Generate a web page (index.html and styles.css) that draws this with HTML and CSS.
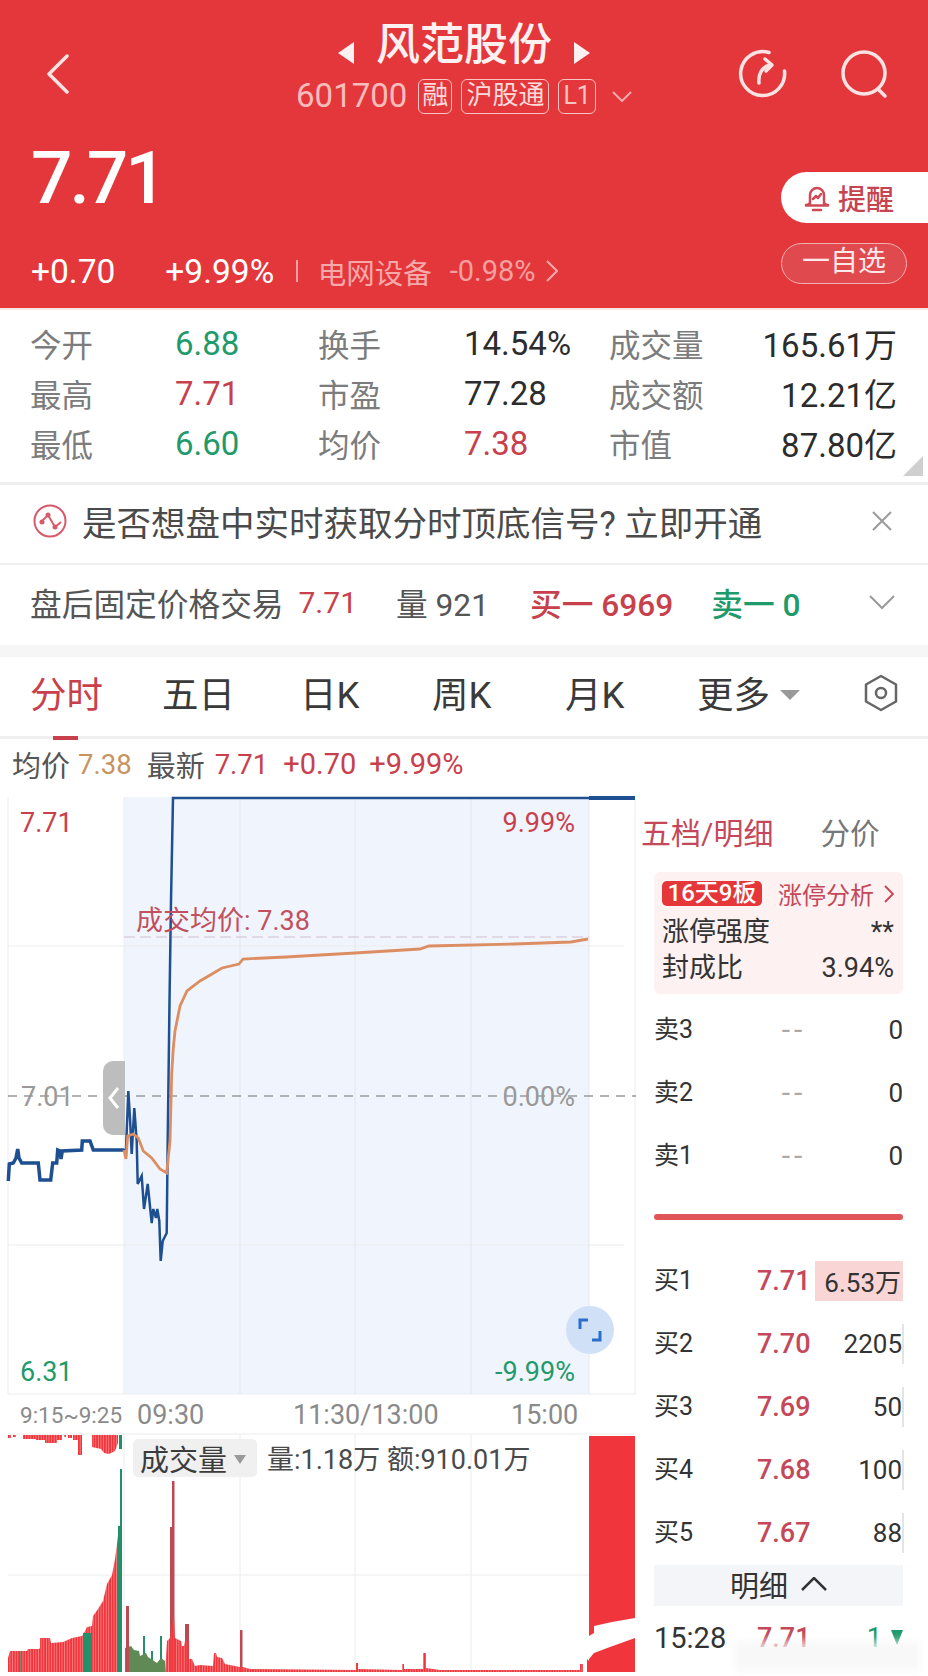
FILE: index.html
```html
<!DOCTYPE html>
<html lang="zh-CN">
<head>
<meta charset="utf-8">
<title>风范股份</title>
<link rel="stylesheet" href="styles.css">
</head>
<body>
<div class="page">
  <header class="header">
    <div class="topbar">
      <div class="back">
        <svg width="24" height="40" viewBox="0 0 24 40"><path d="M21 2 3 20l18 18" class="ico-line"/></svg>
      </div>
      <div class="identity">
        <div class="title-row">
          <span class="tri tri-left"></span>
          <span class="title">风范股份</span>
          <span class="tri tri-right"></span>
        </div>
        <div class="code-row">
          <span class="code">601700</span>
          <span class="tag tag-one">融</span>
          <span class="tag">沪股通</span>
          <span class="tag tag-l1">L1</span>
          <svg class="code-chevron" width="20" height="11" viewBox="0 0 20 11"><path d="M1 1l9 9 9-9" class="ico-thin"/></svg>
        </div>
      </div>
      <div class="top-icons">
        <svg width="50" height="50" viewBox="0 0 50 50"><path d="M31 3.500A22 22 0 1 0 46.500 22" class="ico-line"/><path d="M21 34c-1-9 3-16 11-18" class="ico-line"/><path d="M27 10l7 6-6 6" class="ico-line"/></svg>
        <svg width="50" height="50" viewBox="0 0 50 50"><circle cx="24" cy="24" r="21" class="ico-line"/><path d="M39 41l6 6" class="ico-line"/></svg>
      </div>
    </div>
    <div class="quote">
      <div class="quote-main">
        <div class="price">7.71</div>
        <div class="change-row">
          <span class="chg">+0.70</span>
          <span class="chg chg-pct">+9.99%</span>
          <span class="vbar"></span>
          <span class="sector">电网设备</span>
          <span class="sector-pct">-0.98%</span>
          <svg width="12" height="22" viewBox="0 0 12 22"><path d="M1 1l10 10L1 21" class="ico-thin"/></svg>
        </div>
      </div>
      <div class="actions">
        <div class="remind">
          <svg width="26" height="30" viewBox="0 0 26 30"><path d="M6 22V12a7 7 0 0 1 14 0v10M2 22c3 0 4-1 4-3M24 22c-3 0-4-1-4-3M2 22.500h22M9 27h8" class="ico-bell"/><path d="M9 16l3-3 2 2 3-4" class="ico-bell"/></svg>
          <span>提醒</span>
        </div>
        <div class="watch">一自选</div>
      </div>
    </div>
  </header>

  <section class="stats">
    <span class="s-label">今开</span><span class="s-val green">6.88</span>
    <span class="s-label">换手</span><span class="s-val">14.54%</span>
    <span class="s-label">成交量</span><span class="s-val right">165.61万</span>
    <span class="s-label">最高</span><span class="s-val red">7.71</span>
    <span class="s-label">市盈</span><span class="s-val">77.28</span>
    <span class="s-label">成交额</span><span class="s-val right">12.21亿</span>
    <span class="s-label">最低</span><span class="s-val green">6.60</span>
    <span class="s-label">均价</span><span class="s-val red">7.38</span>
    <span class="s-label">市值</span><span class="s-val right">87.80亿</span>
    <span class="fold"></span>
  </section>

  <section class="notice">
    <svg width="34" height="34" viewBox="0 0 34 34"><circle cx="17" cy="17" r="15.500" class="ico-signal"/><path d="M7 19l8-8 7 12 6-5" class="ico-signal"/><circle cx="9" cy="18" r="2.500" class="dot-signal"/><circle cx="15" cy="11" r="2.500" class="dot-signal"/><circle cx="22" cy="23" r="2.500" class="dot-signal"/></svg>
    <span class="notice-text">是否想盘中实时获取分时顶底信号? 立即开通</span>
    <svg class="notice-x" width="22" height="22" viewBox="0 0 22 22"><path d="M2 2l18 18M20 2 2 20" class="ico-gray"/></svg>
  </section>

  <section class="after">
    <span class="a-title">盘后固定价格交易</span>
    <span class="a-price red">7.71</span>
    <span class="a-vol">量 921</span>
    <span class="a-buy red">买一 6969</span>
    <span class="a-sell green">卖一 0</span>
    <svg class="a-chevron" width="26" height="15" viewBox="0 0 26 15"><path d="M1 1l12 12L25 1" class="ico-gray"/></svg>
  </section>

  <div class="gap"></div>

  <nav class="tabs">
    <span class="tab tab-on">分时</span>
    <span class="tab tab-5d">五日</span>
    <span class="tab tab-d">日K</span>
    <span class="tab tab-w">周K</span>
    <span class="tab tab-m">月K</span>
    <span class="tab tab-more">更多<i class="more-tri"></i></span>
    <svg class="hex" width="36" height="38" viewBox="0 0 36 38"><path d="M18 2l15 8.500v17L18 36 3 27.500v-17z" class="ico-hex"/><circle cx="18" cy="19" r="5" class="ico-hex"/></svg>
  </nav>

  <div class="info">
    <span class="i-label">均价</span><span class="i-avg">7.38</span>
    <span class="i-label i-new">最新</span><span class="i-red">7.71</span>
    <span class="i-red i-chg">+0.70</span><span class="i-red i-pct">+9.99%</span>
  </div>

  <div class="board">
    <div class="charts">
      <div class="price-chart">
        <svg class="plot" width="628" height="598" viewBox="8 796 628 598">
          <rect x="124" y="796" width="465" height="597" class="shade"/>
          <path d="M8 796v597M635 796v597M124 796v597M8 945h616M8 1244h616M8 1393h628" class="grid"/>
          <path d="M240 796v597M355 796v597M471 796v597M589 796v597" class="grid-in"/>
          <path d="M8 1095h628" class="mid-dash"/>
          <path d="M124 936h465" class="avg-dash"/>
          <polyline class="line-thick" points="8.300,1180 9.300,1163 13.300,1162 16,1157 17.700,1148 19,1157 21.700,1162 38.300,1162 40,1179 50.700,1179 52.700,1162 56.700,1162 57.700,1149 60,1150 61,1158 62.300,1150 81.700,1149 82.300,1140 90,1140 93.300,1149 124,1149"/>
          <polyline class="line-thin" points="124,1149 126,1149 128.300,1090 130,1117 131.700,1153 134.300,1107 136.700,1140 137.700,1183 141.700,1175 144,1208 147.700,1183 151.700,1222 153.300,1208 156,1217 157.300,1208 159.300,1220 160.700,1260 162.700,1240 166.700,1232 167.700,1140 169,1040 169.500,1000 171,900 173,797 589,797"/>
          <path d="M589 797h46" class="line-end"/>
          <polyline class="line-avg" points="124,1149 126,1158 127.700,1135 133.300,1133 138.300,1137 143.300,1150 151.700,1157 160,1168 166.700,1172 170,1140 171.700,1073 173.300,1047 175,1030 180,1005 187,990 200,980 212,973 222,967 239,963 243,958 286,956 355,952 420,948 429,945 514,943 571,941 588,938"/>
          <text x="20" y="831" class="ax red-t">7.71</text>
          <text x="575" y="831" class="ax red-t end">9.99%</text>
          <text x="136" y="929" class="avg-text">成交均价: 7.38</text>
          <text x="21" y="1105" class="ax gray-t">7.01</text>
          <text x="575" y="1105" class="ax gray-t end">0.00%</text>
          <text x="20" y="1380" class="ax green-t">6.31</text>
          <text x="575" y="1380" class="ax green-t end">-9.99%</text>
        </svg>
        <div class="handle">
          <svg width="12" height="24" viewBox="0 0 12 24"><path d="M10 2 2 12l8 10" class="ico-handle"/></svg>
        </div>
        <div class="expand">
          <svg width="24" height="24" viewBox="0 0 24 24"><path d="M10 2H2v9M14 22h8v-9" class="ico-expand"/></svg>
        </div>
      </div>
      <div class="time-axis">
        <span class="t-pre">9:15~9:25</span>
        <span class="t-open">09:30</span>
        <span class="t-mid">11:30/13:00</span>
        <span class="t-end">15:00</span>
      </div>
      <div class="vol-chart">
        <svg class="plot" width="628" height="243" viewBox="8 1433 628 243">
          <defs>
            <pattern id="bars" width="2.600" height="10" patternUnits="userSpaceOnUse"><rect width="2.200" height="10" fill="#f0363c"/><rect x="2.200" width="0.400" height="10" fill="#f3686c"/></pattern>
          </defs>
          <path d="M8 1433h628M8 1574h581M124 1433v238M240 1433v238M355 1433v238M471 1433v238" class="grid"/>
          <polygon fill="url(#bars)" points="8,1671 8,1657 10,1650 27,1650 28,1648 39,1648 40,1647 40,1637 50,1637 51,1642 63,1641 72,1637 82,1635 84,1632 87,1626 92,1625 93,1615 98,1608 103,1600 107,1583 112,1574 115,1558 117,1543 119,1525 121,1525 121,1671"/>
          <path fill="url(#bars)" d="M8 1434h3v3H8zM13 1434h3v2h-3zM23 1434h13v4H23zM36 1434h9v5h-9zM45 1434h12v8H45zM57 1434h5v5h-5zM64 1434h2v2h-2zM68 1434h4v3h-4zM73 1434h5v5h-5zM78 1434h4v20h-4zM92 1434h26v8l-3 8-6 3-5-1-3-4-9-2z"/>
          <path class="bar-green" d="M119 1434h3v14h-3zM120 1468h2v203h-2zM118 1525h2v146h-2zM83 1632h9v39h-9zM19 1650h1.500v21H19zM143 1635h2v36h-2zM151 1650h2v21h-2zM160 1635h2v36h-2z"/>
          <polygon class="bar-mix" points="125,1671 125,1647 131,1645 134,1649 139,1650 140,1655 146,1652 148,1656 157,1662 161,1657 165,1660 165,1671"/>
          <path class="bar-spike" d="M126 1605h3v66h-3zM170 1526h2v145h-2zM172 1480h2.500v191H172zM185 1623h4v48h-4zM240 1629h2.500v42H240z"/>
          <polygon fill="url(#bars)" points="165,1671 167,1640 170,1637 174,1613 175,1637 177,1638 181,1640 182,1645 184,1645 185,1640 189,1640 189,1658 192,1658 195,1665 200,1664 213,1665 214,1652 216,1652 217,1656 222,1657 225,1663 235,1665 240,1666 243,1666 250,1668 356,1669 356,1662 358,1662 358,1668 402,1669 402,1663 404,1663 404,1668 423,1668 423,1652 426,1652 426,1667 440,1669 580,1669 580,1663 583,1663 583,1671"/>
          <polygon class="bar-red" points="587,1671 587,1658 589,1660 589,1671"/>
          <polygon class="bar-red" points="589,1435 635,1435 635,1617 612,1621 594,1625 594,1632 589,1635"/>
          <polygon class="bar-red" points="589,1658 594,1652 610,1646 635,1637 635,1671 589,1671"/>
        </svg>
        <div class="vol-head">
          <span class="vol-select">成交量<i class="vol-tri"></i></span>
          <span class="vol-text">量:1.18万 额:910.01万</span>
        </div>
      </div>
    </div>

    <aside class="side">
      <div class="side-tabs">
        <span class="side-on">五档/明细</span>
        <span class="side-off">分价</span>
      </div>
      <div class="limit">
        <div class="limit-head">
          <span class="limit-badge">16天9板</span>
          <span class="limit-link">涨停分析</span>
          <svg width="10" height="18" viewBox="0 0 10 18"><path d="M1 1l8 8-8 8" class="ico-pink"/></svg>
        </div>
        <div class="limit-row"><span>涨停强度</span><span>**</span></div>
        <div class="limit-row"><span>封成比</span><span>3.94%</span></div>
      </div>
      <div class="book book-ask">
        <div class="b-row"><span class="b-name">卖3</span><span class="b-none">--</span><span class="b-qty">0</span></div>
        <div class="b-row"><span class="b-name">卖2</span><span class="b-none">--</span><span class="b-qty">0</span></div>
        <div class="b-row"><span class="b-name">卖1</span><span class="b-none">--</span><span class="b-qty">0</span></div>
      </div>
      <div class="split"></div>
      <div class="book">
        <div class="b-row"><span class="b-name">买1</span><span class="b-price">7.71</span><span class="b-qty b-top">6.53万</span></div>
        <div class="b-row"><span class="b-name">买2</span><span class="b-price">7.70</span><span class="b-qty b-tick">2205</span></div>
        <div class="b-row"><span class="b-name">买3</span><span class="b-price">7.69</span><span class="b-qty b-tick">50</span></div>
        <div class="b-row"><span class="b-name">买4</span><span class="b-price">7.68</span><span class="b-qty b-tick">100</span></div>
        <div class="b-row"><span class="b-name">买5</span><span class="b-price">7.67</span><span class="b-qty b-tick">88</span></div>
      </div>
      <div class="detail">
        <span>明细</span>
        <svg width="26" height="14" viewBox="0 0 26 14"><path d="M1 13 13 1l12 12" class="ico-dark"/></svg>
      </div>
      <div class="b-row">
        <span class="b-time">15:28</span><span class="b-price">7.71</span>
        <span class="b-last">1<i class="last-tri"></i></span>
      </div>
    </aside>
  </div>
  <div class="watermark"></div>
</div>
</body>
</html>
```
FILE: styles.css
```css
* { box-sizing: border-box; }
html, body { margin: 0; padding: 0; background: #fff; }
body { font-family: Roboto, "Noto Sans CJK SC", sans-serif; color: #333; }
i { font-style: normal; display: inline-block; }
svg { display: block; }

.page { position: relative; width: 928px; height: 1676px; overflow: hidden; }

.ico-line { fill: none; stroke: #fbe3e3; stroke-width: 3.500; stroke-linecap: round; stroke-linejoin: round; }
.ico-thin { fill: none; stroke: #f4aaaa; stroke-width: 2; }
.ico-bell { fill: none; stroke: #cf4a55; stroke-width: 2.500; stroke-linecap: round; stroke-linejoin: round; }
.ico-signal { fill: none; stroke: #d85a6a; stroke-width: 2; }
.dot-signal { fill: #d85a6a; }
.ico-gray { fill: none; stroke: #9a9a9a; stroke-width: 2; }
.ico-hex { fill: none; stroke: #666; stroke-width: 2.500; stroke-linejoin: round; }
.ico-handle { fill: none; stroke: #fff; stroke-width: 3; }
.ico-expand { fill: none; stroke: #2a6fc9; stroke-width: 3; }
.ico-pink { fill: none; stroke: #c4485a; stroke-width: 2; }
.ico-dark { fill: none; stroke: #333; stroke-width: 2.500; }

.green { color: #1f9a6a; }
.red { color: #c8404c; }

/* header */
.header { height: 308px; background: #e4373b; color: #fdf0f0; }
.topbar { display: grid; grid-template-columns: 1fr auto 1fr; height: 115px; }
.back { padding: 54px 0 0 46px; }
.identity { display: flex; flex-direction: column; align-items: center; padding-top: 23px; }
.title-row { display: flex; align-items: center; gap: 22px; height: 44px; }
.title { font-size: 44px; font-weight: 500; line-height: 44px; }
.tri { width: 0; height: 0; border-top: 11px solid transparent; border-bottom: 11px solid transparent; margin-top: 16px; }
.tri-left { border-right: 16px solid #fdf0f0; }
.tri-right { border-left: 16px solid #fdf0f0; }
.code-row { display: flex; align-items: center; gap: 9px; margin-top: 11px; height: 36px; color: #f8bcbc; }
.code { font-size: 33px; line-height: 36px; margin-right: 2px; }
.tag { border: 1.500px solid #f8c4c4; border-radius: 6px; height: 35px; padding: 0 4px; font-size: 26px; line-height: 31px; color: #fbdcdc; }
.tag-one { padding: 0 3px; }
.tag-l1 { font-size: 25px; color: #f8c4c4; }
.code-chevron { margin-left: 7px; }
.top-icons { display: flex; justify-content: flex-end; gap: 52px; padding: 49px 38px 0 0; }

.quote { display: flex; justify-content: space-between; height: 193px; }
.quote-main { padding: 25px 0 0 31px; }
.price { font-size: 73px; line-height: 76px; letter-spacing: -3px; color: #fff; font-weight: 500; }
.change-row { display: flex; align-items: center; margin-top: 40px; height: 30px; }
.chg { font-size: 33.500px; color: #fff; }
.chg-pct { margin-left: 50px; }
.vbar { width: 1.500px; height: 22px; background: #f4a0a0; margin: 0 20px 0 22px; }
.sector { font-size: 28.500px; color: #f7a9a9; }
.sector-pct { font-size: 29px; color: #f4a0a0; margin: 0 10px 0 18px; }
.actions { display: flex; flex-direction: column; align-items: flex-end; gap: 20px; padding-top: 57px; }
.remind { display: flex; align-items: center; gap: 8px; width: 147px; height: 51px; padding-left: 23px; background: #fff; border-radius: 26px 0 0 26px; color: #c6434f; font-size: 28px; font-weight: 500; }
.watch { width: 126px; height: 41px; margin-right: 21px; border: 1.500px solid #f6b0b0; border-radius: 21px; background: #e04a4e; color: #fde8e8; font-size: 28px; line-height: 36px; text-align: center; }

/* stats */
.stats { position: relative; display: grid; grid-template-columns: 145px 143px 146px 145px 1fr 1fr; grid-auto-rows: 50px; align-items: center; padding: 8px 31px 15px 30px; border-top: 2px solid #fbe4e4; border-bottom: 3px solid #efefef; height: 177px; }
.s-label { color: #7c7c7c; font-size: 31.500px; }
.s-val { font-size: 33px; color: #2c2c2c; }
.s-val.green { color: #1f9a6a; }
.s-val.red { color: #c8404c; }
.s-val.right { text-align: right; }
.fold { position: absolute; right: 5px; bottom: 6px; width: 20px; height: 20px; background: #cfcfcf; clip-path: polygon(100% 0, 100% 100%, 0 100%); }

/* notice */
.notice { display: flex; align-items: center; height: 80px; padding: 0 35px 6px 33px; border-bottom: 2px solid #efefef; }
.notice-text { font-size: 34.500px; color: #4a4a4a; margin-left: 15px; white-space: nowrap; }
.notice-x { margin-left: auto; }

/* after hours */
.after { position: relative; display: flex; align-items: center; height: 80px; padding: 0 0 6px 30px; font-size: 31.700px; color: #555; white-space: nowrap; }
.a-price { margin-left: 15px; font-size: 30px; }
.a-vol { margin-left: 39px; }
.a-buy { margin-left: 41px; font-weight: 500; }
.a-sell { margin-left: 38px; font-weight: 500; }
.a-chevron { margin-left: auto; margin-right: 33px; }

.gap { height: 12px; background: #f6f6f6; }

/* tabs */
.tabs { display: flex; align-items: center; height: 82px; border-bottom: 3px solid #efefef; padding: 0 0 8px 30px; font-size: 36.500px; color: #3a3a3a; }
.tab { white-space: nowrap; }
.tab-on { position: relative; color: #c8404c; width: 132px; }
.tab-on::after { content: ""; position: absolute; left: 23px; bottom: -21px; width: 25px; height: 4px; background: #c8404c; }
.tab-5d { width: 138px; }
.tab-d { width: 132px; }
.tab-w { width: 133px; }
.tab-m { width: 132px; }
.tab-more { display: flex; align-items: center; }
.more-tri { width: 0; height: 0; margin: 4px 0 0 10px; border-left: 10px solid transparent; border-right: 10px solid transparent; border-top: 10px solid #999; }
.hex { margin-left: auto; margin-right: 29px; }

/* info */
.info { display: flex; align-items: center; height: 58px; padding: 0 0 8px 12px; font-size: 27.500px; white-space: nowrap; }
.i-label { color: #555; font-size: 29px; }
.i-avg { color: #c8935f; margin-left: 8px; }
.i-new { margin-left: 15px; }
.i-red { color: #c8404c; margin-left: 10px; }
.i-chg { margin-left: 15px; font-size: 29px; }
.i-pct { margin-left: 13px; font-size: 29px; }

/* board */
.board { display: flex; align-items: flex-start; padding-left: 8px; }
.charts { width: 628px; flex: none; }
.price-chart { position: relative; height: 598px; }
.plot { position: absolute; left: 0; top: 0; overflow: visible; }
.shade { fill: #f0f4fd; }
.grid { fill: none; stroke: #ececec; stroke-width: 1; }
.grid-in { fill: none; stroke: #e2e6f1; stroke-width: 1; }
.mid-dash { fill: none; stroke: #9a9a9a; stroke-width: 1.500; stroke-dasharray: 9 7; }
.avg-dash { fill: none; stroke: #d3bdd0; stroke-width: 1; stroke-dasharray: 11 5; }
.line-thick { fill: none; stroke: #1d4f91; stroke-width: 3.500; }
.line-thin { fill: none; stroke: #1d4f91; stroke-width: 2.500; }
.line-end { fill: none; stroke: #1d4f91; stroke-width: 4; }
.line-avg { fill: none; stroke: #dc8e62; stroke-width: 2.800; }
.ax { font-size: 27px; font-family: Roboto, sans-serif; }
.end { text-anchor: end; }
.red-t { fill: #c8404c; }
.gray-t { fill: #999; }
.green-t { fill: #1f9a6a; }
.avg-text { font-size: 27px; fill: #c2505e; font-family: Roboto, "Noto Sans CJK SC", sans-serif; }
.handle { position: absolute; left: 95px; top: 264px; display: flex; align-items: center; justify-content: center; width: 22px; height: 74px; background: #bdbdbd; border-radius: 10px 0 0 10px; }
.expand { position: absolute; left: 558px; top: 509px; display: flex; align-items: center; justify-content: center; width: 48px; height: 48px; border-radius: 50%; background: #cfe0f7; }

.time-axis { position: relative; height: 39px; display: flex; align-items: center; color: #8a8a8a; font-size: 27px; white-space: nowrap; }
.t-pre { font-size: 22.500px; margin-left: 12px; width: 117px; }
.t-open { width: 156px; }
.t-mid { width: 218px; }

.vol-chart { position: relative; height: 243px; }
.bar-red { fill: #f0363c; }
.bar-green { fill: #23906a; }
.bar-mix { fill: #5f8a55; }
.bar-spike { fill: #bd4a50; }
.vol-head { position: absolute; left: 125px; top: 4px; display: flex; align-items: center; white-space: nowrap; }
.vol-select { display: flex; align-items: center; height: 38px; width: 124px; padding-left: 7px; background: #f0f0f0; border-radius: 5px; font-size: 29px; color: #3c3c3c; }
.vol-tri { width: 0; height: 0; margin: 4px 0 0 7px; border-left: 6px solid transparent; border-right: 6px solid transparent; border-top: 9px solid #999; }
.vol-text { margin-left: 10px; font-size: 27px; color: #4a4a4a; }

/* side */
.side { width: 249px; margin-left: 18px; flex: none; }
.side-tabs { position: relative; display: flex; align-items: center; height: 75px; margin-left: -13px; padding-bottom: 8px; white-space: nowrap; }
.side-on { font-size: 30px; color: #c4485a; }
.side-off { font-size: 29.500px; color: #777; margin-left: 47px; }
.limit { height: 122px; padding: 9px 9px 0 8px; background: #fdf1f1; border-radius: 6px; font-size: 27px; color: #333; }
.limit-head { display: flex; align-items: center; height: 25px; margin-bottom: 8px; white-space: nowrap; }
.limit-badge { height: 25px; width: 101px; background: #e5373a; border-radius: 5px; color: #fff; font-size: 24px; line-height: 25px; text-align: center; font-weight: 500; }
.limit-link { font-size: 24px; color: #c4485a; margin: 0 10px 0 16px; }
.limit-row { display: flex; justify-content: space-between; align-items: center; height: 36px; line-height: 36px; }
.book-ask { margin-top: 4px; }
.b-row { position: relative; display: flex; align-items: center; height: 63px; font-size: 27px; color: #333; }
.b-name { width: 103px; font-size: 25px; margin-bottom: 6px; }
.b-time { width: 103px; font-size: 29px; }
.b-price { width: 58px; color: #c4485a; font-weight: 500; }
.b-none { width: 30px; color: #aaa; text-align: center; font-size: 30px; letter-spacing: 4px; margin-left: 22px; white-space: nowrap; }
.b-qty { margin-left: auto; padding-right: 0; font-size: 26px; }
.b-top { display: flex; align-items: center; height: 40px; padding: 0 2px 0 9px; background: #f9d5d5; }
.b-tick { display: flex; align-items: center; height: 40px; border-right: 2px solid #e4e4e4; margin-right: -1px; }
.split { height: 6px; margin: 27px 0 29px; background: #e0555a; border-radius: 3px; }
.detail { display: flex; align-items: center; justify-content: center; gap: 13px; height: 41px; margin-top: 1px; padding-bottom: 4px; background: #f3f5f8; font-size: 29px; color: #333; }
.b-last { margin-left: auto; display: flex; align-items: center; gap: 9px; color: #1f9a6a; }
.last-tri { width: 0; height: 0; border-left: 6.500px solid transparent; border-right: 6.500px solid transparent; border-top: 15px solid #1f9a6a; }

.watermark { position: absolute; right: 8px; bottom: 5px; width: 185px; height: 30px; background: rgba(246,246,246,.78); filter: blur(4px); }
```
